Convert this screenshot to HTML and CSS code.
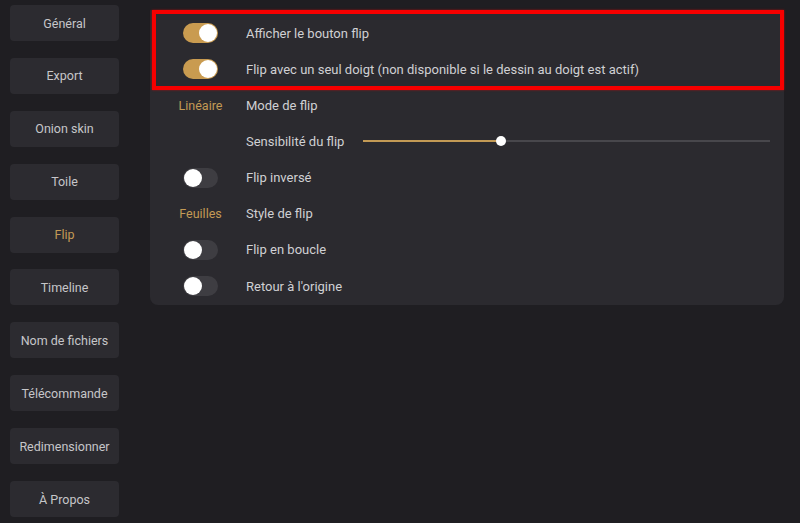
FILE: index.html
```html
<!DOCTYPE html>
<html>
<head>
<meta name="viewport" content="width=device-width, initial-scale=1">
<link rel="stylesheet" href="styles.css">
</head>
<body>
<div class="app">
  <div class="sidebar">
    <div class="nav-btn">Général</div>
    <div class="nav-btn">Export</div>
    <div class="nav-btn">Onion skin</div>
    <div class="nav-btn">Toile</div>
    <div class="nav-btn active">Flip</div>
    <div class="nav-btn">Timeline</div>
    <div class="nav-btn">Nom de fichiers</div>
    <div class="nav-btn">Télécommande</div>
    <div class="nav-btn">Redimensionner</div>
    <div class="nav-btn">À Propos</div>
  </div>

  <div class="main">
    <div class="panel">
      <div class="highlight-group">
        <div class="row">
          <div class="lead"><span class="toggle on"></span></div>
          <div class="label">Afficher le bouton flip</div>
        </div>
        <div class="row">
          <div class="lead"><span class="toggle on"></span></div>
          <div class="label">Flip avec un seul doigt (non disponible si le dessin au doigt est actif)</div>
        </div>
      </div>
      <div class="row">
        <div class="lead value">Linéaire</div>
        <div class="label">Mode de flip</div>
      </div>
      <div class="row">
        <div class="lead"></div>
        <div class="label">Sensibilité du flip</div>
        <div class="slider">
          <div class="slider-fill" style="width: 33.7%"></div>
          <div class="slider-knob"></div>
        </div>
      </div>
      <div class="row">
        <div class="lead"><span class="toggle"></span></div>
        <div class="label">Flip inversé</div>
      </div>
      <div class="row">
        <div class="lead value">Feuilles</div>
        <div class="label">Style de flip</div>
      </div>
      <div class="row">
        <div class="lead"><span class="toggle"></span></div>
        <div class="label">Flip en boucle</div>
      </div>
      <div class="row">
        <div class="lead"><span class="toggle"></span></div>
        <div class="label">Retour à l'origine</div>
      </div>
    </div>
  </div>
</div>
</body>
</html>
```

FILE: styles.css
```css
body {
  margin: 0;
  background-color: #1f1e22;
  font-family: Roboto, "Noto Sans", sans-serif;
  color: #d0d0d3;
  height: 523px;
  overflow: hidden;
}

.app {
  display: flex;
}

.sidebar {
  width: 109px;
  padding: 5px 0 0 10px;
  display: flex;
  flex-direction: column;
  gap: 16.9px;
}

.nav-btn {
  height: 36px;
  background-color: #2c2b30;
  border-radius: 4px;
  display: flex;
  align-items: center;
  justify-content: center;
  font-size: 12.5px;
  color: #c6c6c9;
}

.nav-btn.active {
  color: #c39a55;
}

.main {
  padding: 10px 0 0 31px;
  width: 634px;
}

.panel {
  background-color: #2b2a2f;
  border-radius: 0 0 8px 8px;
  padding: 5px 0 1px;
}

.highlight-group {
  position: relative;
}

.highlight-group::after {
  content: "";
  position: absolute;
  top: -5px;
  left: 2px;
  right: 0;
  bottom: -3px;
  border: 4px solid #f60000;
  box-shadow: 0 0 2px rgba(246, 0, 0, 0.6);
}

.row {
  height: 36.15px;
  display: flex;
  align-items: center;
  padding-right: 14px;
}

.lead {
  width: 96px;
  padding-left: 5px;
  box-sizing: border-box;
  display: flex;
  justify-content: center;
  align-items: center;
}

.value {
  font-size: 12.5px;
  color: #c39a55;
}

.label {
  font-size: 13px;
  white-space: nowrap;
}

.toggle {
  position: relative;
  width: 35px;
  height: 20px;
  border-radius: 10px;
  background-color: #3e3d42;
}

.toggle::after {
  content: "";
  position: absolute;
  top: 1px;
  left: 1px;
  width: 18px;
  height: 18px;
  border-radius: 50%;
  background-color: #ffffff;
}

.toggle.on {
  background-color: #c99b50;
}

.toggle.on::after {
  left: 16px;
}

.slider {
  position: relative;
  flex: 1;
  height: 2px;
  margin-left: 19px;
  background-color: #48474c;
  display: flex;
  align-items: center;
}

.slider-fill {
  height: 2px;
  background-color: #c39a55;
}

.slider-knob {
  width: 10px;
  height: 10px;
  border-radius: 50%;
  background-color: #ffffff;
  margin-left: -4px;
}
```
